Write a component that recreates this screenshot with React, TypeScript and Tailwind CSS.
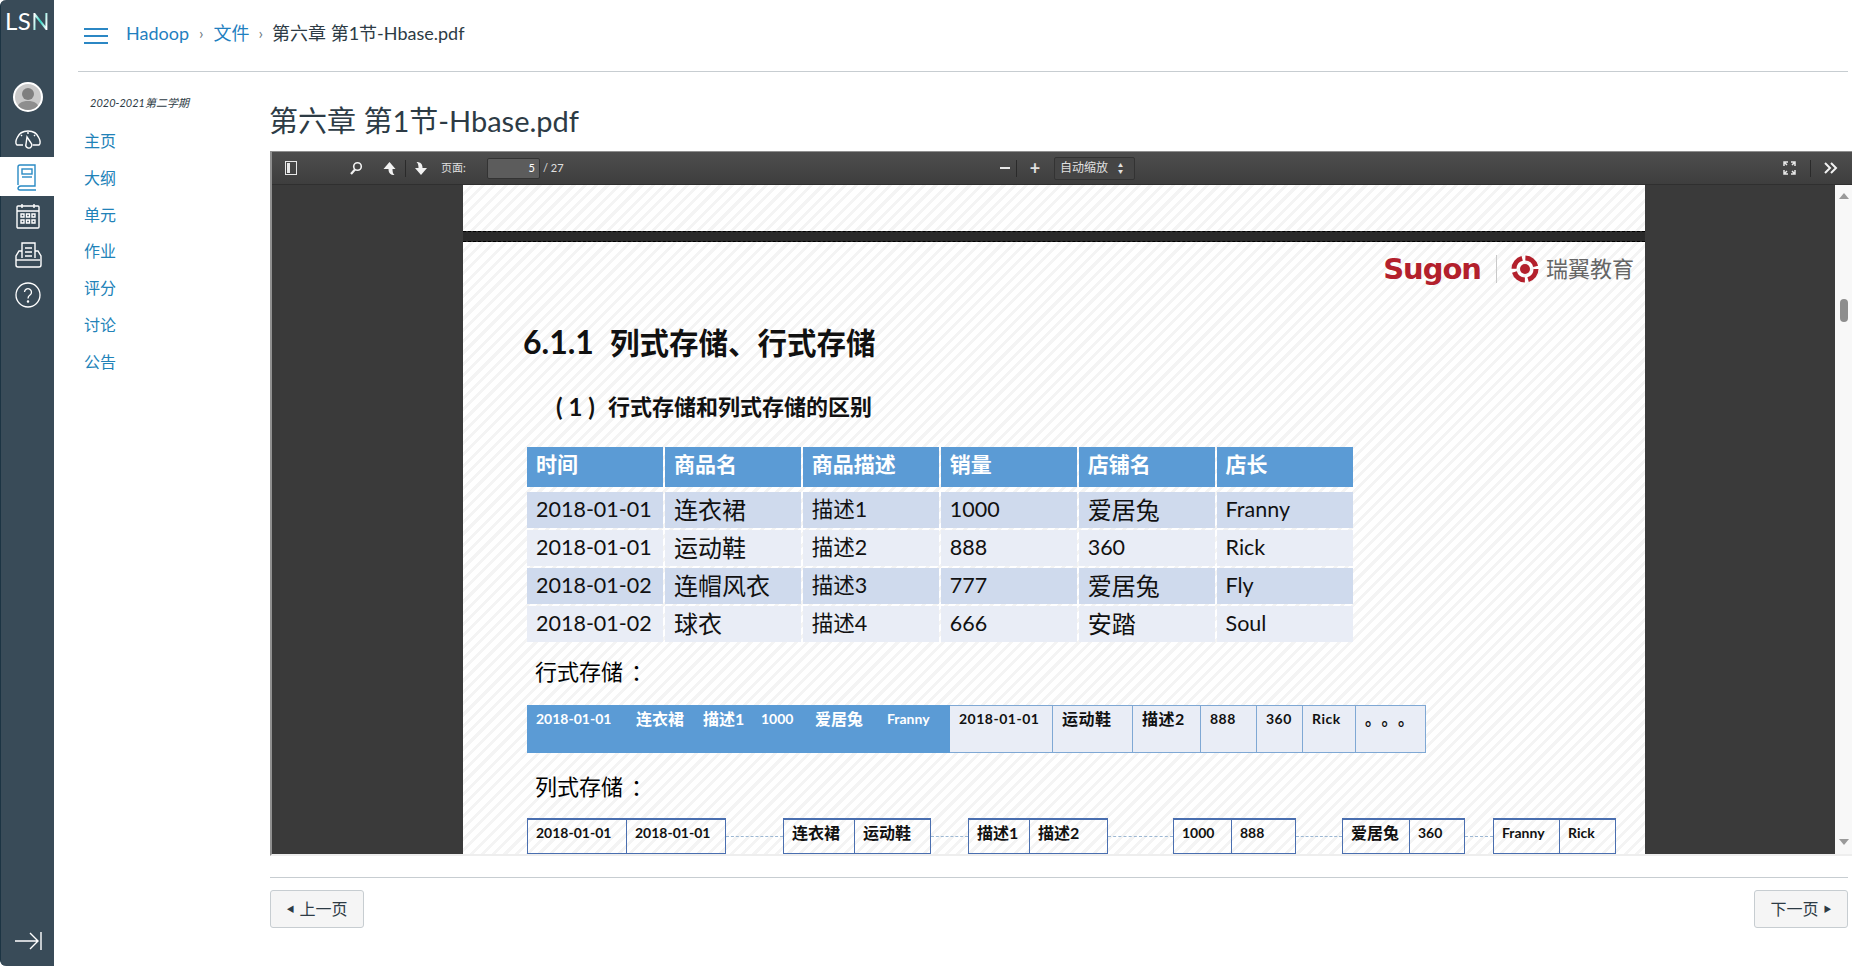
import React from "react";

const sans = "font-[family-name:Lato,'Noto_Sans_CJK_SC',sans-serif]";
const stripes = "bg-[repeating-linear-gradient(135deg,#ffffff_0px,#ffffff_5px,#f4f4f4_5px,#f4f4f4_8px)]";

const courseLinks = ["主页", "大纲", "单元", "作业", "评分", "讨论", "公告"];

const tableHead = ["时间", "商品名", "商品描述", "销量", "店铺名", "店长"];
const tableRows = [
  { bg: "bg-[#cfdaed]", cells: ["2018-01-01", "连衣裙", "描述1", "1000", "爱居兔", "Franny"] },
  { bg: "bg-[#e9edf6]", cells: ["2018-01-01", "运动鞋", "描述2", "888", "360", "Rick"] },
  { bg: "bg-[#cfdaed]", cells: ["2018-01-02", "连帽风衣", "描述3", "777", "爱居兔", "Fly"] },
  { bg: "bg-[#e9edf6]", cells: ["2018-01-02", "球衣", "描述4", "666", "安踏", "Soul"] },
];

const rowBlue = [
  { w: "w-[100px]", t: "2018-01-01" },
  { w: "w-[67px]", t: "连衣裙" },
  { w: "w-[58px]", t: "描述1" },
  { w: "w-[54px]", t: "1000" },
  { w: "w-[72px]", t: "爱居兔" },
  { w: "w-[54px]", t: "Franny" },
];
const rowLight = [
  { w: "w-[103px]", t: "2018-01-01" },
  { w: "w-[80px]", t: "运动鞋" },
  { w: "w-[68px]", t: "描述2" },
  { w: "w-[56px]", t: "888" },
  { w: "w-[46px]", t: "360" },
  { w: "w-[53px]", t: "Rick" },
  { w: "w-[70px]", t: "。。。" },
];

const columnGroups = [
  { a: "w-[100px]", at: "2018-01-01", b: "w-[99px]", bt: "2018-01-01", dash: "w-[57px]" },
  { a: "w-[72px]", at: "连衣裙", b: "w-[76px]", bt: "运动鞋", dash: "w-[37px]" },
  { a: "w-[62px]", at: "描述1", b: "w-[78px]", bt: "描述2", dash: "w-[65px]" },
  { a: "w-[59px]", at: "1000", b: "w-[64px]", bt: "888", dash: "w-[46px]" },
  { a: "w-[68px]", at: "爱居兔", b: "w-[55px]", bt: "360", dash: "w-[28px]" },
  { a: "w-[67px]", at: "Franny", b: "w-[56px]", bt: "Rick", dash: "" },
];

// CJK runs sit a bit larger than the latin ones in the slide image
const cellSize = (t: string) => (/[\u3000-\u9fff]/.test(t) ? "text-[16px]" : "text-[14px]");

function SideIcon({ children }: { children: React.ReactNode }) {
  return (
    <svg width="30" height="30" viewBox="0 0 30 30" fill="none" stroke="currentColor" strokeWidth="1.4">
      {children}
    </svg>
  );
}

function Sidebar() {
  return (
    <aside className="flex h-full w-[54px] shrink-0 flex-col items-center rounded-l-[6px] border-l border-[#1c3443] bg-[#394b58] text-white">
      <div className="mt-[8px] h-[26px] text-[24px] font-normal leading-[26px] tracking-[0.5px]">
        LS<span className="bg-[linear-gradient(100deg,#ffffff_20%,#2fd6c4_50%,#ffffff_80%)] bg-clip-text text-transparent">N</span>
      </div>
      <div className="mt-[48px] flex h-[30px] w-[30px] items-center justify-center overflow-hidden rounded-full border-2 border-white bg-[#c9c9c9]">
        <svg width="26" height="26" viewBox="0 0 26 26">
          <circle cx="13" cy="10" r="6" fill="#7f7f7f" />
          <path d="M2 26c0-7 5-9 11-9s11 2 11 9z" fill="#8e8e8e" />
        </svg>
      </div>
      <div className="mt-[10px] flex h-[30px] items-center">
        <SideIcon>
          <path d="M10 23H4c-2-1-1-5 0-7 2-5 6-7 11-7s9 2 11 7c1 2 2 6 0 7h-6" />
          <path d="M14 15l4 6a3 3 0 1 1-5 1z" />
          <path d="M15 10v2M8 13l1 1M22 13l-1 1" />
        </SideIcon>
      </div>
      <div className="-ml-px mt-[5px] flex h-[39px] w-[54px] items-center justify-center bg-white text-[#2a8ac4]">
        <SideIcon>
          <path d="M6 23V5a2 2 0 0 1 2-2h15v21H9a3 3 0 0 0-3 2 2 2 0 0 0 2 2h16" />
          <rect x="10" y="7" width="10" height="5" />
          <path d="M10 15h10" />
        </SideIcon>
      </div>
      <div className="mt-[5px] flex h-[30px] items-center">
        <SideIcon>
          <rect x="4" y="5" width="22" height="22" rx="1" />
          <path d="M4 10h22M9 3v4M21 3v4" />
          <path d="M8 13h3v3H8zM13.500 13h3v3h-3zM19 13h3v3h-3zM8 19h3v3H8zM13.500 19h3v3h-3zM19 19h3v3h-3z" />
        </SideIcon>
      </div>
      <div className="mt-[9px] flex h-[30px] items-center">
        <SideIcon>
          <path d="M9 18V3h13v15" />
          <path d="M12 8h7M12 12h7M12 16h7" />
          <path d="M9 11H6l-3 5v9a2 2 0 0 0 2 2h21a2 2 0 0 0 2-2v-9l-3-5h-3" />
          <path d="M3 20h24" />
        </SideIcon>
      </div>
      <div className="mt-[10px] flex h-[30px] items-center">
        <svg width="26" height="26" viewBox="0 0 26 26" fill="none" stroke="currentColor" strokeWidth="1.3">
          <circle cx="13" cy="13" r="12" />
          <path d="M9.500 10a3.500 3.500 0 1 1 5.500 3c-1.500 1-2 1.500-2 3.500" />
          <circle cx="13" cy="19.500" r=".6" fill="currentColor" />
        </svg>
      </div>
      <div className="mb-[15px] mt-auto">
        <svg width="28" height="20" viewBox="0 0 28 20" fill="none" stroke="currentColor" strokeWidth="1.4">
          <path d="M1 10h23M16 2l8 8-8 8M27 1v18" />
        </svg>
      </div>
    </aside>
  );
}

function Toolbar() {
  return (
    <div className="flex h-[33px] shrink-0 items-center border-b border-[#2f2f2f] bg-[linear-gradient(#4e4e4e,#3e3e3e)] text-[#e0e0e0]">
      <div className="flex w-[722px] items-center">
        <svg className="ml-[13px]" width="12" height="14" viewBox="0 0 12 14">
          <rect x=".5" y=".5" width="11" height="13" fill="none" stroke="#e8e8e8" />
          <rect x="2" y="2" width="3" height="10" fill="#e8e8e8" />
        </svg>
        <svg className="ml-[52px]" width="14" height="14" viewBox="0 0 14 14" fill="none" stroke="#f2f2f2" strokeWidth="1.600">
          <circle cx="8.500" cy="5.500" r="3.800" />
          <path d="M6 8.500 2 13" strokeWidth="2.200" />
        </svg>
        <svg className="ml-[19px]" width="15" height="15" viewBox="0 0 15 15">
          <path d="M7.500 1 13.500 8H10.500c0 3 .5 5 2 6-4 0-6-2-6-6H1.500z" fill="#f2f2f2" />
        </svg>
        <div className="ml-[8px] h-[17px] w-px bg-[#2a2a2a]" />
        <svg className="ml-[8px]" width="14" height="15" viewBox="0 0 14 15">
          <path d="M7 14 1 7h3.500c0-3-.5-5-2-6 4 0 6 2 6 6H13z" fill="#f2f2f2" />
        </svg>
        <span className="ml-[13px] w-[29px] whitespace-nowrap text-[11px]">页面:</span>
        <div className="ml-[17px] flex h-[21px] w-[53px] items-center justify-end rounded-[2px] border border-[#333] bg-[#5c5c5c] pr-[4px] text-[11px] text-white">
          5
        </div>
        <span className="ml-[3px] text-[11px]">/ 27</span>
      </div>
      <div className="flex items-center">
        <div className="ml-[6px] h-[2px] w-[10px] bg-[#e8e8e8]" />
        <div className="ml-[6px] h-[17px] w-px bg-[#2a2a2a]" />
        <span className="ml-[12px] w-[12px] text-center text-[18px] font-bold leading-none">+</span>
        <div className="ml-[13px] flex h-[23px] w-[81px] items-center rounded-[2px] border border-[#333] bg-[#454545] pl-[5px] text-[12px]">
          自动缩放
          <span className="ml-[10px] text-[5px] leading-[6px]">
            ▲
            <br />▼
          </span>
        </div>
      </div>
      <div className="ml-auto flex items-center pr-[14px]">
        <svg width="13" height="14" viewBox="0 0 13 14" fill="none" stroke="#e8e8e8" strokeWidth="1.500">
          <path d="M1 5V1h4M8 1h4v4M1 9v4h4M8 13h4V9M1 1l3 3M12 1 9 4M1 13l3-3M12 13l-3-3" />
        </svg>
        <div className="ml-[14px] h-[17px] w-px bg-[#2a2a2a]" />
        <svg className="ml-[13px]" width="14" height="12" viewBox="0 0 14 12" fill="none" stroke="#f2f2f2" strokeWidth="2">
          <path d="M1 1l5 5-5 5M7 1l5 5-5 5" />
        </svg>
      </div>
    </div>
  );
}

function SugonLogo() {
  return (
    <div className="box-content flex h-[28px] items-center justify-end pr-[11px] pt-[13px]">
      <span className="font-[family-name:'DejaVu_Sans',sans-serif] text-[29px] font-bold leading-[28px] tracking-[-1px] text-[#b3202c]">
        Sugon
      </span>
      <div className="ml-[15px] h-[28px] w-px bg-[#c9c9c9]" />
      <svg className="ml-[14px]" width="28" height="28" viewBox="0 0 28 28" fill="none">
        <circle cx="14" cy="14" r="11" stroke="#b3202c" strokeWidth="5" strokeDasharray="14 3.300" />
        <circle cx="14" cy="14" r="5" fill="#b3202c" />
      </svg>
      <span className="ml-[7px] text-[22px] leading-[28px] text-[#666666]">瑞翼教育</span>
    </div>
  );
}

function PdfPage() {
  return (
    <div className={`h-[640px] ${stripes} pl-[64px] text-black`}>
      <div className="-ml-[64px]">
        <SugonLogo />
      </div>
      <h2 className="-ml-[4px] mt-[41px] h-[36px] whitespace-pre text-[29.500px] font-bold leading-[36px] text-[#111]">
        <span className="text-[32px]">6.1.1</span>
        <span className="ml-[16px]">列式存储、行式存储</span>
      </h2>
      <h3 className="ml-[29px] mt-[32px] flex h-[30px] items-center text-[22px] font-bold leading-[30px] text-[#111]">
        <span className="w-[52px] whitespace-pre text-[24px]">( 1 )</span>
        行式存储和列式存储的区别
      </h3>
      <div className="mt-[25px] w-[826px]">
        <div className="grid h-[40px] grid-cols-6 gap-x-[1.500px]">
          {tableHead.map((h) => (
            <div key={h} className="bg-[#5b9bd5] pl-[9px] text-[21px] font-bold leading-[33px] text-white">
              {h}
            </div>
          ))}
        </div>
        <div className="mt-[5px] flex flex-col gap-y-[2px]">
          {tableRows.map((row, i) => (
            <div key={i} className="grid h-[36px] grid-cols-6 gap-x-[1.500px]">
              {row.cells.map((c, j) => (
                <div
                  key={j}
                  className={`${row.bg} whitespace-nowrap pl-[9px] leading-[35px] ${
                    /^[\u3000-\u9fff]+$/.test(c) ? "text-[24px]" : "text-[21.500px]"
                  } text-[#111]`}
                >
                  {c}
                </div>
              ))}
            </div>
          ))}
        </div>
      </div>
      <div className="ml-[8px] mt-[15px] h-[30px] text-[22px] leading-[30px]">
        行式存储<span className="ml-[8px]">：</span>
      </div>
      <div className="mt-[18px] flex h-[48px] w-fit">
        <div className="flex w-[423px] bg-[#5b9bd5] pl-[9px] pt-[4px] font-bold leading-[20px] text-white">
          {rowBlue.map((c) => (
            <span key={c.t} className={`${c.w} ${cellSize(c.t)} shrink-0 whitespace-nowrap`}>
              {c.t}
            </span>
          ))}
        </div>
        {rowLight.map((c) => (
          <div
            key={c.t}
            className={`${c.w} ${cellSize(c.t)} shrink-0 whitespace-nowrap border-y border-r border-[#7fa8d4] bg-[#e9edf6] pl-[9px] pt-[3px] font-bold leading-[20px] tracking-[0.5px] text-[#111] [text-spacing-trim:space-all]`}
          >
            {c.t}
          </div>
        ))}
      </div>
      <div className="ml-[8px] mt-[19px] h-[30px] text-[22px] leading-[30px]">
        列式存储<span className="ml-[8px]">：</span>
      </div>
      <div className="mt-[16px] flex h-[37px] w-fit">
        {columnGroups.map((g) => (
          <React.Fragment key={g.at}>
            <div className={`${g.a} ${cellSize(g.at)} shrink-0 whitespace-nowrap border border-y-2 border-[#4a6fb0] pl-[8px] pt-[3px] font-bold leading-[20px] text-[#111]`}>
              {g.at}
            </div>
            <div className={`${g.b} ${cellSize(g.bt)} shrink-0 whitespace-nowrap border border-y-2 border-l-0 border-[#4a6fb0] pl-[8px] pt-[3px] font-bold leading-[20px] text-[#111]`}>
              {g.bt}
            </div>
            {g.dash && <div className={`${g.dash} mt-[18px] h-0 shrink-0 border-t border-dashed border-[#9db8d3]`} />}
          </React.Fragment>
        ))}
      </div>
    </div>
  );
}

function PdfViewer() {
  return (
    <div className="-mr-[4px] flex h-[705px] flex-col overflow-hidden border-b-2 border-l-2 border-t border-[#8f8f8f] border-b-[#eeeeee]">
      <Toolbar />
      <div className="flex min-h-0 flex-1">
        <div className="min-w-0 flex-1 overflow-hidden bg-[#3a3a3a] pl-[191px]">
          <div className="w-[1182px]">
            <div className={`h-[46px] ${stripes}`} />
            <div className="h-[11px] border-y border-dashed border-black bg-[#2a2a2a]" />
            <PdfPage />
          </div>
        </div>
        <div className="flex w-[17px] shrink-0 flex-col items-center bg-[#f8f8f8] pt-[8px]">
          <div className="h-0 w-0 border-x-[5px] border-b-[6px] border-x-transparent border-b-[#9a9a9a]" />
          <div className="mt-[100px] h-[23px] w-[8px] rounded-full bg-[#8d8d8d]" />
          <div className="mb-[9px] mt-auto h-0 w-0 border-x-[5px] border-t-[6px] border-x-transparent border-t-[#9a9a9a]" />
        </div>
      </div>
    </div>
  );
}

function PagerButton({ children }: { children: React.ReactNode }) {
  return (
    <button className="flex h-[38px] w-[94px] items-center justify-center gap-[5px] rounded-[3px] border border-[#c7cdd1] bg-[#f5f5f5] text-[16px] text-[#2d3b45]">
      {children}
    </button>
  );
}

export default function App() {
  return (
    <div className={`${sans} flex h-[966px] w-full overflow-hidden bg-white text-[#2d3b45]`}>
      <Sidebar />
      <main className="min-w-0 flex-1 px-[24px]">
        <header className="flex h-[72px] items-center border-b border-[#c7cdd1] pb-[5px]">
          <svg width="24" height="16" viewBox="0 0 24 16" className="ml-[6px] mt-[5px]" stroke="#2b87c4" strokeWidth="2">
            <path d="M0 1h24M0 8h24M0 15h24" />
          </svg>
          <a className="ml-[18px] text-[18px] text-[#1f80c0]">Hadoop</a>
          <span className="mx-[10px] text-[16px] text-[#6b7780]">›</span>
          <a className="text-[18px] text-[#1f80c0]">文件</a>
          <span className="mx-[9px] text-[16px] text-[#6b7780]">›</span>
          <span className="text-[18px]">第六章 第1节-Hbase.pdf</span>
        </header>
        <div className="flex">
          <nav className="w-[192px] shrink-0 pl-[6px]">
            <div className="ml-[6px] mt-[22px] h-[18px] text-[11px] italic leading-[18px]">2020-2021第二学期</div>
            <ul className="mt-[17px] flex flex-col gap-y-[12.800px]">
              {courseLinks.map((l) => (
                <li key={l} className="h-[24px] text-[16px] leading-[24px] text-[#2182b8]">
                  {l}
                </li>
              ))}
            </ul>
          </nav>
          <section className="min-w-0 flex-1">
            <h1 className="-ml-px mt-[30px] h-[38px] text-[29px] leading-[38px]">第六章 第1节-Hbase.pdf</h1>
            <div className="mt-[11px]">
              <PdfViewer />
            </div>
            <div className="mt-[21px] border-t border-[#c7cdd1] pt-[12px]">
              <div className="flex justify-between">
                <PagerButton>
                  <span className="text-[8px]">◀</span>上一页
                </PagerButton>
                <PagerButton>
                  下一页<span className="text-[8px]">▶</span>
                </PagerButton>
              </div>
            </div>
          </section>
        </div>
      </main>
    </div>
  );
}
